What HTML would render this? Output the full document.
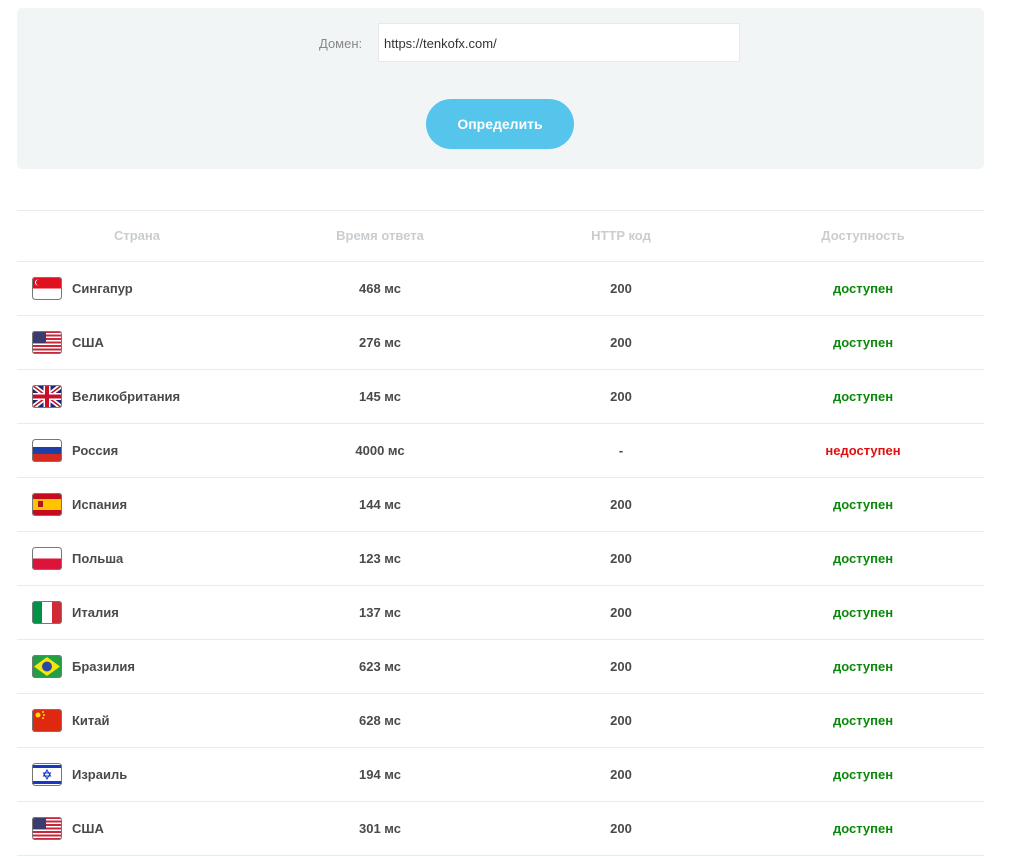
<!DOCTYPE html>
<html><head><meta charset="utf-8"><style>
body{margin:0;background:#fff;font-family:"Liberation Sans","DejaVu Sans",sans-serif;width:1011px;height:840px;overflow:hidden;position:relative}
.panel{position:absolute;left:17px;top:8px;width:967px;height:161px;background:#f2f5f5;border-radius:5px}
.lbl{position:absolute;left:302px;top:28px;font-size:13px;color:#888}
.inp{position:absolute;left:361px;top:15px;width:362px;height:39px;background:#fff;border:1px solid #e6eaea;box-sizing:border-box;font-size:13px;color:#333;padding:12px 0 0 5px}
.btn{position:absolute;left:409px;top:91px;width:148px;height:50px;border-radius:25px;background:#56c5ec;color:#fff;font-weight:bold;font-size:14px;text-align:center;line-height:50px}
.tbl{position:absolute;left:17px;top:210px;width:967px;border-top:1px solid #e8ebeb}
.row{height:53px;border-bottom:1px solid #e8ebeb;position:relative;font-size:13px;font-weight:bold;color:#4a4a4a}
.hdr{height:50px;color:#c9cdd0;font-weight:bold}
.c{position:absolute;top:0;line-height:53px;text-align:center;width:200px}
.hdr .c{line-height:50px}
.c1{left:20px}.c2{left:263px}.c3{left:504px}.c4{left:746px}
.flag{position:absolute;left:15px;top:15px;width:30px;height:23px}
.name{position:absolute;left:55px;top:0;line-height:53px}
.g{color:#0a8a0a}.r{color:#e01010}
</style></head><body>
<div class="panel">
<div class="lbl">Домен:</div>
<div class="inp">https://tenkofx.com/</div>
<div class="btn">Определить</div>
</div>
<svg width="0" height="0" style="position:absolute"><defs>
<clipPath id="cp"><rect width="30" height="23" rx="3"/></clipPath>
<g id="us"><rect width="30" height="23" fill="#fff"/><g fill="#c6283b"><rect y="0" width="30" height="2"/><rect y="3.5" width="30" height="2"/><rect y="7" width="30" height="2"/><rect y="10.5" width="30" height="2"/><rect y="14" width="30" height="2"/><rect y="17.5" width="30" height="2"/><rect y="21" width="30" height="2"/></g><rect width="14" height="12" fill="#3c3b6e"/></g>
</defs></svg>
<div class="tbl">
<div class="row hdr"><div class="c c1">Страна</div><div class="c c2">Время ответа</div><div class="c c3">HTTP код</div><div class="c c4">Доступность</div></div>

<div class="row"><svg class="flag"><g clip-path="url(#cp)"><rect width="30" height="23" fill="#fff"/><rect width="30" height="11.5" fill="#e01020"/><circle cx="6" cy="5.5" r="3" fill="#fff"/><circle cx="7" cy="5.5" r="3" fill="#e01020"/></g><rect x=".5" y=".5" width="29" height="22" rx="3" fill="none" stroke="#777"/></svg><div class="name">Сингапур</div><div class="c c2">468 мс</div><div class="c c3">200</div><div class="c c4 g">доступен</div></div>

<div class="row"><svg class="flag"><g clip-path="url(#cp)"><use href="#us"/></g><rect x=".5" y=".5" width="29" height="22" rx="3" fill="none" stroke="#777"/></svg><div class="name">США</div><div class="c c2">276 мс</div><div class="c c3">200</div><div class="c c4 g">доступен</div></div>

<div class="row"><svg class="flag"><g clip-path="url(#cp)"><rect width="30" height="23" fill="#1a2a6c"/><path d="M0 0L30 23M30 0L0 23" stroke="#fff" stroke-width="5"/><path d="M0 0L30 23M30 0L0 23" stroke="#c8102e" stroke-width="1.5"/><path d="M15 0V23M0 11.5H30" stroke="#fff" stroke-width="7"/><path d="M15 0V23M0 11.5H30" stroke="#c8102e" stroke-width="4"/></g><rect x=".5" y=".5" width="29" height="22" rx="3" fill="none" stroke="#777"/></svg><div class="name">Великобритания</div><div class="c c2">145 мс</div><div class="c c3">200</div><div class="c c4 g">доступен</div></div>

<div class="row"><svg class="flag"><g clip-path="url(#cp)"><rect width="30" height="8" fill="#fff"/><rect y="8" width="30" height="7" fill="#1c3fa8"/><rect y="15" width="30" height="8" fill="#d52b1e"/></g><rect x=".5" y=".5" width="29" height="22" rx="3" fill="none" stroke="#777"/></svg><div class="name">Россия</div><div class="c c2">4000 мс</div><div class="c c3">-</div><div class="c c4 r">недоступен</div></div>

<div class="row"><svg class="flag"><g clip-path="url(#cp)"><rect width="30" height="23" fill="#c60b1e"/><rect y="6" width="30" height="11" fill="#ffc400"/><rect x="6" y="8" width="5" height="6" fill="#ad1519"/></g><rect x=".5" y=".5" width="29" height="22" rx="3" fill="none" stroke="#777"/></svg><div class="name">Испания</div><div class="c c2">144 мс</div><div class="c c3">200</div><div class="c c4 g">доступен</div></div>

<div class="row"><svg class="flag"><g clip-path="url(#cp)"><rect width="30" height="11.5" fill="#fff"/><rect y="11.5" width="30" height="11.5" fill="#dc143c"/></g><rect x=".5" y=".5" width="29" height="22" rx="3" fill="none" stroke="#777"/></svg><div class="name">Польша</div><div class="c c2">123 мс</div><div class="c c3">200</div><div class="c c4 g">доступен</div></div>

<div class="row"><svg class="flag"><g clip-path="url(#cp)"><rect width="10" height="23" fill="#009246"/><rect x="10" width="10" height="23" fill="#fff"/><rect x="20" width="10" height="23" fill="#ce2b37"/></g><rect x=".5" y=".5" width="29" height="22" rx="3" fill="none" stroke="#777"/></svg><div class="name">Италия</div><div class="c c2">137 мс</div><div class="c c3">200</div><div class="c c4 g">доступен</div></div>

<div class="row"><svg class="flag"><g clip-path="url(#cp)"><rect width="30" height="23" fill="#229e45"/><path d="M15 2L28 11.5L15 21L2 11.5Z" fill="#f8e509"/><circle cx="15" cy="11.5" r="5" fill="#2b49a3"/></g><rect x=".5" y=".5" width="29" height="22" rx="3" fill="none" stroke="#777"/></svg><div class="name">Бразилия</div><div class="c c2">623 мс</div><div class="c c3">200</div><div class="c c4 g">доступен</div></div>

<div class="row"><svg class="flag"><g clip-path="url(#cp)"><rect width="30" height="23" fill="#de2910"/><circle cx="6" cy="6" r="2.5" fill="#ffde00"/><circle cx="11" cy="3" r="1" fill="#ffde00"/><circle cx="12" cy="6" r="1" fill="#ffde00"/><circle cx="11" cy="9" r="1" fill="#ffde00"/></g><rect x=".5" y=".5" width="29" height="22" rx="3" fill="none" stroke="#777"/></svg><div class="name">Китай</div><div class="c c2">628 мс</div><div class="c c3">200</div><div class="c c4 g">доступен</div></div>

<div class="row"><svg class="flag"><g clip-path="url(#cp)"><rect width="30" height="23" fill="#fff"/><rect y="2" width="30" height="3" fill="#1737c8"/><rect y="18" width="30" height="3" fill="#1737c8"/><path d="M15 7L18.5 13H11.5ZM15 16L11.5 10H18.5Z" fill="none" stroke="#1737c8" stroke-width="1"/></g><rect x=".5" y=".5" width="29" height="22" rx="3" fill="none" stroke="#777"/></svg><div class="name">Израиль</div><div class="c c2">194 мс</div><div class="c c3">200</div><div class="c c4 g">доступен</div></div>

<div class="row"><svg class="flag"><g clip-path="url(#cp)"><use href="#us"/></g><rect x=".5" y=".5" width="29" height="22" rx="3" fill="none" stroke="#777"/></svg><div class="name">США</div><div class="c c2">301 мс</div><div class="c c3">200</div><div class="c c4 g">доступен</div></div>
</div>
</body></html>
